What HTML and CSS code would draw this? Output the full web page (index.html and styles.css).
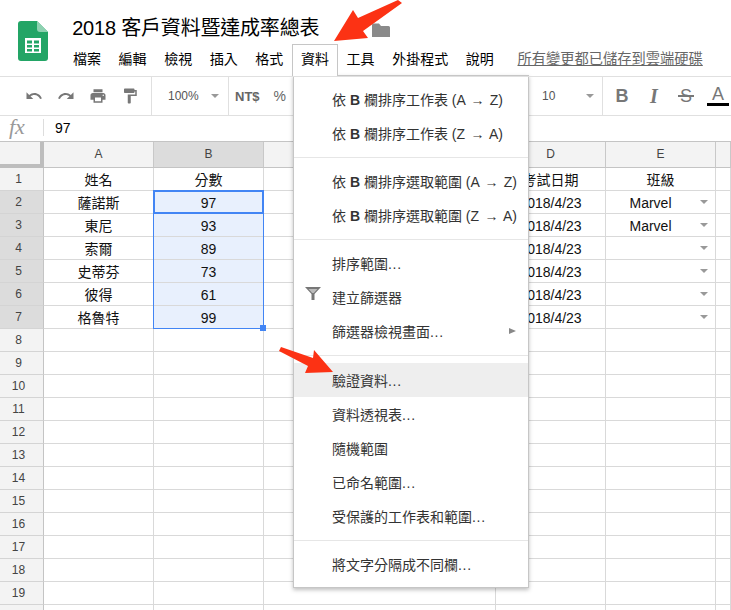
FILE: index.html
```html
<!DOCTYPE html>
<html lang="zh-Hant">
<head>
<meta charset="utf-8">
<title>2018 客戶資料暨達成率總表</title>
<link rel="stylesheet" href="styles.css">
</head>
<body>
<div class="page">
  <header class="topbar">
    <svg class="logo" viewBox="0 0 30 40" width="30" height="40">
      <path d="M3 0H19L30 11V37a3 3 0 0 1-3 3H3a3 3 0 0 1-3-3V3a3 3 0 0 1 3-3z" fill="#23a566"/>
      <path d="M19 0L30 11H22a3 3 0 0 1-3-3z" fill="#8ed1b1"/>
      <path d="M7 17H23V32H7zM9 19.5V22.500H14V19.500zM16 19.500V22.500H21V19.500zM9 24V26.500H14V24zM16 24V26.500H21V24zM9 28V30.500H14V28zM16 28V30.500H21V28z" fill="#fff" fill-rule="evenodd"/>
    </svg>
    <div class="head-col">
      <div class="title-row">
        <span class="title">2018 客戶資料暨達成率總表</span>
        <svg class="folder" viewBox="0 0 18 14" width="18" height="14"><path d="M0 2a1.500 1.500 0 0 1 1.500-1.500H7L9 3h7.500A1.500 1.500 0 0 1 18 4.500V14H0z" fill="#8a8a8a"/></svg>
      </div>
      <nav class="menubar">
        <span class="mb">檔案</span><span class="mb">編輯</span><span class="mb">檢視</span><span class="mb">插入</span><span class="mb">格式</span><span class="mb active">資料</span><span class="mb">工具</span><span class="mb">外掛程式</span><span class="mb">說明</span><span class="saved">所有變更都已儲存到雲端硬碟</span>
      </nav>
    </div>
  </header>

  <div class="toolbar">
    <div class="tg g1">
      <svg class="ti" viewBox="0 0 24 24"><path d="M12.500 8c-2.650 0-5.050.99-6.900 2.600L2 7v9h9l-3.620-3.620c1.390-1.160 3.160-1.880 5.120-1.880 3.540 0 6.550 2.310 7.600 5.500l2.370-.78C21.080 11.030 17.150 8 12.500 8z"/></svg>
      <svg class="ti" viewBox="0 0 24 24"><path d="M18.400 10.600C16.550 8.990 14.150 8 11.500 8c-4.650 0-8.580 3.030-9.960 7.220L3.900 16c1.050-3.190 4.050-5.500 7.600-5.500 1.950 0 3.730.72 5.120 1.880L13 16h9V7l-3.600 3.600z"/></svg>
      <svg class="ti" viewBox="0 0 24 24"><path d="M19 8H5c-1.660 0-3 1.340-3 3v6h4v4h12v-4h4v-6c0-1.660-1.340-3-3-3zm-3 11H8v-5h8v5zm3-7c-.55 0-1-.45-1-1s.45-1 1-1 1 .45 1 1-.45 1-1 1zm-1-9H6v4h12V3z"/></svg>
      <svg class="ti" viewBox="0 0 24 24"><path d="M18 4V3c0-.55-.45-1-1-1H5c-.55 0-1 .45-1 1v4c0 .55.45 1 1 1h12c.55 0 1-.45 1-1V6h1v4H9v11c0 .55.45 1 1 1h2c.55 0 1-.45 1-1v-9h8V4h-3z"/></svg>
    </div>
    <div class="tg g2"><span class="tt">100%</span><i class="caret"></i></div>
    <div class="tg g3"><b class="cur">NT$</b><span class="pct">%</span></div>
    <div class="tg g4"><span class="tt">10</span><i class="caret"></i></div>
    <div class="tg g5">
      <span class="fmt fb">B</span>
      <span class="fmt fi">I</span>
      <span class="fmt fs">S</span>
      <span class="fmt fa">A</span>
    </div>
  </div>

  <div class="formula">
    <span class="fx">fx</span>
    <span class="fv">97</span>
  </div>

  <div class="sheet">
    <div class="corner"></div><div class="ch">A</div><div class="ch on">B</div><div class="ch"></div><div class="ch">D</div><div class="ch">E</div><div class="ch"></div>
    <div class="rh">1</div><div class="c">姓名</div><div class="c">分數</div><div class="c"></div><div class="c">考試日期</div><div class="c">班級</div><div class="c"></div>
    <div class="rh on">2</div><div class="c">薩諾斯</div><div class="c sel">97</div><div class="c"></div><div class="c lat">2018/4/23</div><div class="c dd lat">Marvel<i class="caret"></i></div><div class="c"></div>
    <div class="rh on">3</div><div class="c">東尼</div><div class="c sel">93</div><div class="c"></div><div class="c lat">2018/4/23</div><div class="c dd lat">Marvel<i class="caret"></i></div><div class="c"></div>
    <div class="rh on">4</div><div class="c">索爾</div><div class="c sel">89</div><div class="c"></div><div class="c lat">2018/4/23</div><div class="c dd"><i class="caret"></i></div><div class="c"></div>
    <div class="rh on">5</div><div class="c">史蒂芬</div><div class="c sel">73</div><div class="c"></div><div class="c lat">2018/4/23</div><div class="c dd"><i class="caret"></i></div><div class="c"></div>
    <div class="rh on">6</div><div class="c">彼得</div><div class="c sel">61</div><div class="c"></div><div class="c lat">2018/4/23</div><div class="c dd"><i class="caret"></i></div><div class="c"></div>
    <div class="rh on">7</div><div class="c">格魯特</div><div class="c sel">99</div><div class="c"></div><div class="c lat">2018/4/23</div><div class="c dd"><i class="caret"></i></div><div class="c"></div>
    <div class="rh">8</div><div class="c"></div><div class="c"></div><div class="c"></div><div class="c"></div><div class="c"></div><div class="c"></div>
    <div class="rh">9</div><div class="c"></div><div class="c"></div><div class="c"></div><div class="c"></div><div class="c"></div><div class="c"></div>
    <div class="rh">10</div><div class="c"></div><div class="c"></div><div class="c"></div><div class="c"></div><div class="c"></div><div class="c"></div>
    <div class="rh">11</div><div class="c"></div><div class="c"></div><div class="c"></div><div class="c"></div><div class="c"></div><div class="c"></div>
    <div class="rh">12</div><div class="c"></div><div class="c"></div><div class="c"></div><div class="c"></div><div class="c"></div><div class="c"></div>
    <div class="rh">13</div><div class="c"></div><div class="c"></div><div class="c"></div><div class="c"></div><div class="c"></div><div class="c"></div>
    <div class="rh">14</div><div class="c"></div><div class="c"></div><div class="c"></div><div class="c"></div><div class="c"></div><div class="c"></div>
    <div class="rh">15</div><div class="c"></div><div class="c"></div><div class="c"></div><div class="c"></div><div class="c"></div><div class="c"></div>
    <div class="rh">16</div><div class="c"></div><div class="c"></div><div class="c"></div><div class="c"></div><div class="c"></div><div class="c"></div>
    <div class="rh">17</div><div class="c"></div><div class="c"></div><div class="c"></div><div class="c"></div><div class="c"></div><div class="c"></div>
    <div class="rh">18</div><div class="c"></div><div class="c"></div><div class="c"></div><div class="c"></div><div class="c"></div><div class="c"></div>
    <div class="rh">19</div><div class="c"></div><div class="c"></div><div class="c"></div><div class="c"></div><div class="c"></div><div class="c"></div>
    <div class="rh"></div><div class="c"></div><div class="c"></div><div class="c"></div><div class="c"></div><div class="c"></div><div class="c"></div>
    <div class="range"><span class="handle"></span></div>
    <div class="activecell"></div>
  </div>

  <div class="menu">
    <div class="mi"><span class="slot"></span><span>依 <b>B</b> 欄排序工作表 (A <span class="arw">→</span> Z)</span></div>
    <div class="mi"><span class="slot"></span><span>依 <b>B</b> 欄排序工作表 (Z <span class="arw">→</span> A)</span></div>
    <div class="sep"></div>
    <div class="mi"><span class="slot"></span><span>依 <b>B</b> 欄排序選取範圍 (A <span class="arw">→</span> Z)</span></div>
    <div class="mi"><span class="slot"></span><span>依 <b>B</b> 欄排序選取範圍 (Z <span class="arw">→</span> A)</span></div>
    <div class="sep"></div>
    <div class="mi"><span class="slot"></span><span>排序範圍<span class="dots">...</span></span></div>
    <div class="mi"><span class="slot"><svg class="funnel" viewBox="0 0 16 13" width="16" height="13"><path d="M0 0H16L9.500 7V13H6.500V7z" fill="#777"/><path d="M3.500 2H12.500L8.800 6H7.200z" fill="#bbb"/></svg></span><span>建立篩選器</span></div>
    <div class="mi"><span class="slot"></span><span>篩選器檢視畫面<span class="dots">...</span></span><i class="sub"></i></div>
    <div class="sep wide"></div>
    <div class="mi hl"><span class="slot"></span><span>驗證資料<span class="dots">...</span></span></div>
    <div class="mi"><span class="slot"></span><span>資料透視表<span class="dots">...</span></span></div>
    <div class="mi"><span class="slot"></span><span>隨機範圍</span></div>
    <div class="mi"><span class="slot"></span><span>已命名範圍<span class="dots">...</span></span></div>
    <div class="mi"><span class="slot"></span><span>受保護的工作表和範圍<span class="dots">...</span></span></div>
    <div class="sep"></div>
    <div class="mi"><span class="slot"></span><span>將文字分隔成不同欄<span class="dots">...</span></span></div>
  </div>

  <svg class="arrows" viewBox="0 0 731 610" width="731" height="610">
    <polygon points="334,41 353,10 358,18 398,0 402,3 363,31 368,38" fill="#fc3214"/>
    <polygon points="333,372 314,350 313,358 281,347 279,351 308,366 305,373" fill="#fc3214"/>
  </svg>
</div>
</body>
</html>
```

FILE: styles.css
```css
* { box-sizing: border-box; }
html, body { margin: 0; padding: 0; }
body {
  font-family: "Liberation Sans", "Noto Sans CJK TC", sans-serif;
  font-size: 14px;
  color: #000;
  background: #fff;
}
.page {
  position: relative;
  width: 731px;
  height: 610px;
  overflow: hidden;
}

/* top */
.topbar {
  position: relative;
  z-index: 5;
  display: flex;
  height: 77px;
  border-bottom: 1px solid #e0e0e0;
}
.logo { margin: 21px 0 0 18px; flex: none; }
.head-col { margin-left: 16.2px; flex: 1; }
.title-row {
  display: flex;
  align-items: center;
  height: 44px;
  padding-left: 8px;
}
.title { font-size: 20px; line-height: 28px; margin-top: 11px; letter-spacing: -0.2px; }
.folder { margin-left: 53px; margin-top: 16px; }
.menubar { display: flex; height: 32px; }
.mb {
  height: 32px;
  line-height: 28px;
  padding: 0 7.8px;
  border: 1px solid transparent;
  border-bottom: 0;
  white-space: nowrap;
}
.mb.active {
  border-color: #c6c6c6;
  background: #fff;
}
.saved {
  margin-left: 15px;
  font-size: 14.25px;
  line-height: 30px;
  color: #666;
  text-decoration: underline;
  white-space: nowrap;
}

/* toolbar */
.toolbar {
  display: flex;
  height: 39px;
  border-bottom: 1px solid #e0e0e0;
  overflow: hidden;
}
.tg {
  display: flex;
  align-items: center;
  height: 38px;
  flex: none;
  border-right: 1px solid #e0e0e0;
}
.g1 { width: 152px; padding-left: 25px; gap: 14px; }
.ti { width: 18px; height: 18px; fill: #777; }
.g2 { width: 77px; padding-left: 16px; }
.g3 { width: 312px; padding-left: 6px; border-right: 0; }
.g4 { width: 62px; padding-left: 1px; }
.g5 { border-right: 0; padding-left: 3px; }
.tt { font-size: 12px; color: #555; width: 44px; }
.g2 .tt { width: 43px; }
.cur { font-size: 13px; color: #666; }
.pct { font-size: 14px; color: #666; margin-left: 14px; }
.caret {
  display: block;
  width: 0;
  height: 0;
  border-left: 4px solid transparent;
  border-right: 4px solid transparent;
  border-top: 4px solid #999;
}
.fmt {
  width: 32px;
  text-align: center;
  color: #777;
  font-size: 18px;
  line-height: 38px;
  flex: none;
}
.fb { font-weight: bold; }
.fi { font-family: "Liberation Serif", serif; font-style: italic; font-weight: bold; font-size: 20px; }
.fs { position: relative; }
.fs::after {
  content: "";
  position: absolute;
  left: 8px;
  top: 18px;
  width: 16px;
  height: 2px;
  background: #777;
}
.fa { position: relative; height: 38px; line-height: 34px; }
.fa::after {
  content: "";
  position: absolute;
  left: 5px;
  top: 26px;
  width: 22px;
  height: 3px;
  background: #000;
}

/* formula */
.formula {
  display: flex;
  align-items: center;
  height: 26px;
  padding-bottom: 2px;
  border-bottom: 1px solid #c4c4c4;
}
.fx {
  width: 44px;
  padding-left: 9px;
  height: 17px;
  line-height: 16px;
  font-family: "Liberation Serif", serif;
  font-style: italic;
  font-size: 22px;
  color: #999;
  border-right: 1px solid #ddd;
}
.fv { margin-left: 11px; }

/* sheet */
.sheet {
  position: relative;
  display: grid;
  grid-template-columns: 44px 110px 110px 232px 110px 110px 15px;
  grid-template-rows: 26px repeat(20, 23px);
}
.corner {
  background: #f3f3f3;
  border-right: 4px solid #bdbdbd;
  border-bottom: 4px solid #bdbdbd;
}
.ch, .rh {
  display: flex;
  align-items: center;
  justify-content: center;
  background: #f3f3f3;
  font-size: 12px;
  color: #444;
}
.ch {
  padding-bottom: 2px;
  border-right: 1px solid #c8c8c8;
  border-bottom: 1px solid #c4c4c4;
}
.rh {
  padding-right: 6px;
  border-right: 1px solid #c4c4c4;
  border-bottom: 1px solid #d4d4d4;
}
.ch.on, .rh.on { background: #dcdcdc; }
.c {
  display: flex;
  align-items: center;
  justify-content: center;
  background: #fff;
  border-right: 1px solid #d9d9d9;
  border-bottom: 1px solid #d9d9d9;
  color: #111;
}
.c.sel { background: #e8f0fd; padding-top: 2px; }
.c.lat { padding-top: 2px; }
.c.dd { position: relative; padding-right: 20px; }
.c.dd .caret { position: absolute; left: 94px; top: 9px; }
.range {
  position: absolute;
  grid-area: 3 / 3 / 9 / 4;
  top: -1px;
  left: -1px;
  right: 0;
  bottom: 0;
  border: 1px solid #4285f4;
}
.activecell {
  position: absolute;
  grid-area: 3 / 3 / 4 / 4;
  top: -1px;
  left: -1px;
  right: 0;
  bottom: 0;
  border: 2px solid #4285f4;
}
.handle {
  position: absolute;
  right: -3px;
  bottom: -3px;
  width: 6px;
  height: 6px;
  background: #4285f4;
}

/* dropdown */
.menu {
  position: absolute;
  left: 293px;
  top: 75px;
  width: 236px;
  height: 513px;
  padding-top: 6px;
  background: #fff;
  border: 1px solid #c6c6c6;
  box-shadow: 0 2px 4px rgba(0,0,0,.25);
  color: #333;
}
.mi {
  position: relative;
  display: flex;
  align-items: center;
  height: 34px;
}
.mi.hl { background: #eee; }
.slot {
  width: 38px;
  flex: none;
  display: flex;
  align-items: center;
  justify-content: center;
}
.funnel { margin-top: -8px; }
.arw { margin: 0 1.5px; }
.dots { letter-spacing: 0.7px; }
.sep { height: 1px; margin: 7px 0 6px; background: #e6e6e6; }
.sep.wide { margin-bottom: 7px; }
.sub {
  position: absolute;
  left: 215px;
  top: 14px;
  width: 0;
  height: 0;
  border-top: 3.500px solid transparent;
  border-bottom: 3.500px solid transparent;
  border-left: 7px solid #888;
}
.arrows { position: absolute; left: 0; top: 0; pointer-events: none; z-index: 6; }
```
